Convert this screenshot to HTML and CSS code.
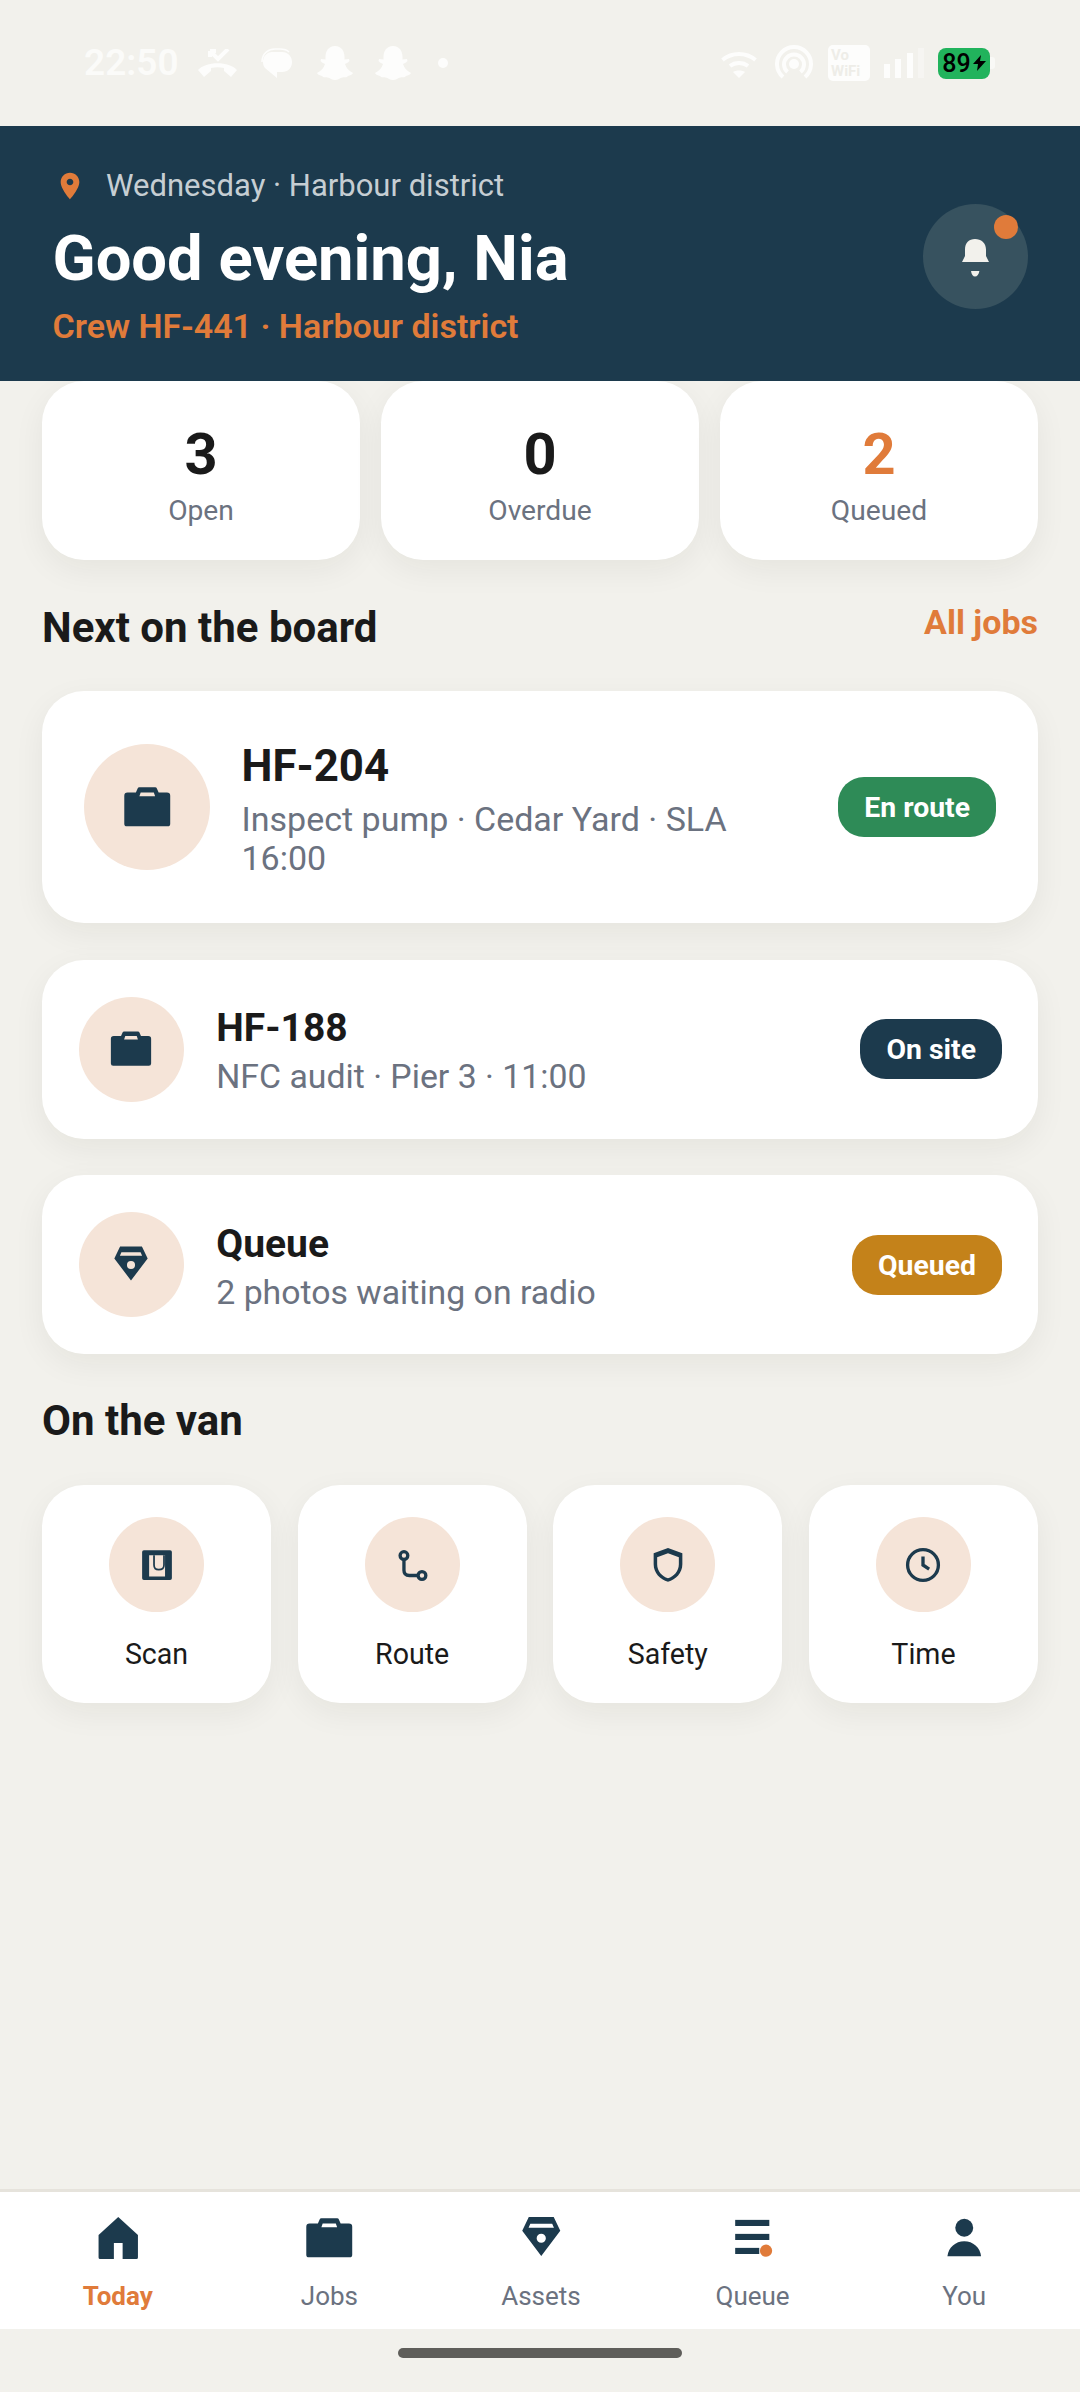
FILE: index.html
```html
<!DOCTYPE html>
<html lang="en">
<head>
<meta charset="utf-8">
<title>Today</title>
<link rel="stylesheet" href="styles.css">
</head>
<body>
<svg class="defs" aria-hidden="true">
  <defs>
    <symbol id="i-case" viewBox="0 0 24 24"><path fill-rule="evenodd" d="M3 5.2H6.8L7.6 3.4Q7.8 2.9 8.4 2.9H15.6Q16.2 2.9 16.4 3.4L17.2 5.2H21Q22.5 5.2 22.5 6.7V19.5Q22.5 20.7 21.3 20.7H2.7Q1.5 20.7 1.5 19.5V6.7Q1.5 5.2 3 5.2ZM9 5.2L8.4 7H15.6L15 5.2Z"/></symbol>
    <symbol id="i-gem" viewBox="0 0 24 24"><path fill-rule="evenodd" d="M6.3 2.3H17.7L20.7 8.6L12 20.1L3.3 8.6ZM7 5.4L6.2 7.2H17.8L17 5.4ZM12 9.9A2.1 2.1 0 1 0 12 14.1A2.1 2.1 0 1 0 12 9.9Z"/></symbol>
    <symbol id="i-ghost" viewBox="0 0 36 34"><path d="M18 0C24.5 0 27.5 5 27.5 11L27.5 13.5L32 13L32.5 15C31 17 29 17.5 28 18C29 22 32 25 36 27C35 29 33 29.5 31 30C29.5 32 27 31 25.5 31.5C23 32 21 34 18 34C15 34 13 32 10.5 31.5C9 31 6.5 32 5 30C3 29.5 1 29 0 27C4 25 7 22 8 18C7 17.5 5 17 3.5 15L4 13L8.5 13.5L8.5 11C8.5 5 11.5 0 18 0Z"/></symbol>
  </defs>
</svg>
<div class="phone">
  <div class="statusbar">
    <div class="status-left">
      <span class="clock">22:50</span>
      <svg class="st st-call" viewBox="0 0 40 28"><path d="M0 21C8 12 31 12 39 21L33 28L26 22V19C22 18 17 18 13 19V22L6 28Z"/><path class="st-line" d="M12 2L20 10L30 0M12 2H18M12 2V8"/></svg>
      <svg class="st st-bubble" viewBox="0 0 35 30"><path class="st-thin" d="M2 14C2 5 9 1 15 1H20C24 1 27 2 29 4"/><path d="M12 4H22C28 4 32 8.500 32 14C32 20 28 24 22 24H17V30L5 20C3 18 3 15 3 13.500C3 8.500 7 4 12 4Z"/></svg>
      <svg class="st st-ghost"><use href="#i-ghost"/></svg>
      <svg class="st st-ghost"><use href="#i-ghost"/></svg>
      <svg class="st st-dot" viewBox="0 0 20 10"><circle cx="10" cy="5" r="5"/></svg>
    </div>
    <div class="status-right">
      <svg class="st st-wifi" viewBox="0 0 41 29"><path class="st-line" d="M2.500 11C12 3 26 3 35.500 11M10 17C15 13 23 13 28 17"/><path d="M13 23C16 21 22 21 25 23L19 29Z"/></svg>
      <svg class="st st-hotspot" viewBox="0 0 39 36"><path class="st-line" d="M8 32A17 17 0 1 1 30 32M12.500 27A10 10 0 1 1 25.500 27"/><circle cx="19" cy="19" r="5"/></svg>
      <div class="vowifi"><span>Vo</span><span>WiFi</span></div>
      <svg class="st st-signal" viewBox="0 0 40 30"><rect x="0" y="16" width="6" height="14"/><rect x="11" y="11" width="6" height="19"/><rect x="23" y="5" width="6" height="25"/><rect class="st-faint" x="34" y="0" width="6" height="30"/></svg>
      <div class="battery">
        <div class="battery-body"><span>89</span><svg class="bolt" viewBox="0 0 13 16"><path d="M8 0L0 9H5L4 16L13 6H7Z"/></svg></div>
        <div class="battery-nub"></div>
      </div>
    </div>
  </div>

  <header class="hero">
    <div class="hero-text">
      <div class="hero-place">
        <svg class="pin" viewBox="0 0 24 24"><path d="M12 2C8.130 2 5 5.130 5 9c0 5.250 7 13 7 13s7-7.750 7-13c0-3.870-3.130-7-7-7zm0 9.500c-1.380 0-2.500-1.120-2.500-2.500s1.120-2.500 2.500-2.500 2.500 1.120 2.500 2.500-1.120 2.500-2.500 2.500z"/></svg>
        <span>Wednesday · Harbour district</span>
      </div>
      <h1 class="hero-title">Good evening, Nia</h1>
      <div class="hero-crew">Crew HF-441 · Harbour district</div>
    </div>
    <div class="bell">
      <svg class="bell-icon" viewBox="0 0 42 42"><path d="M21 3C27 3 32 7 32 13.500V20L35 26H8L11 20V13.500C11 7 15 3 21 3Z"/><path d="M17 35H25.400C25 38.500 23 40.500 21 40.500C19 40.500 17.400 38.500 17 35Z"/></svg>
      <span class="bell-dot"></span>
    </div>
  </header>

  <main class="content">
    <section class="stats">
      <div class="stat"><div class="stat-num">3</div><div class="stat-label">Open</div></div>
      <div class="stat"><div class="stat-num">0</div><div class="stat-label">Overdue</div></div>
      <div class="stat"><div class="stat-num accent">2</div><div class="stat-label">Queued</div></div>
    </section>

    <div class="section-head">
      <h2 class="section-title">Next on the board</h2>
      <span class="section-link">All jobs</span>
    </div>

    <section class="jobs">
      <article class="job job-lead">
        <div class="disc disc-lg"><svg class="ico ico-lg"><use href="#i-case"/></svg></div>
        <div class="job-text">
          <div class="job-title">HF-204</div>
          <div class="job-sub">Inspect pump · Cedar Yard · SLA 16:00</div>
        </div>
        <span class="badge badge-green">En route</span>
      </article>
      <article class="job">
        <div class="disc disc-md"><svg class="ico ico-md"><use href="#i-case"/></svg></div>
        <div class="job-text">
          <div class="job-title">HF-188</div>
          <div class="job-sub">NFC audit · Pier 3 · 11:00</div>
        </div>
        <span class="badge badge-navy">On site</span>
      </article>
      <article class="job">
        <div class="disc disc-md"><svg class="ico ico-md"><use href="#i-gem"/></svg></div>
        <div class="job-text">
          <div class="job-title">Queue</div>
          <div class="job-sub">2 photos waiting on radio</div>
        </div>
        <span class="badge badge-gold">Queued</span>
      </article>
    </section>

    <h2 class="section-title van-title">On the van</h2>

    <section class="tools">
      <div class="tool">
        <div class="disc disc-sm">
          <svg class="ico ico-sm" viewBox="0 0 24 24"><path fill-rule="evenodd" d="M4.500 3.500H19.500Q20.500 3.500 20.500 4.500V19.500Q20.500 20.500 19.500 20.500H4.500Q3.500 20.500 3.500 19.500V4.500Q3.500 3.500 4.500 3.500ZM7.500 6.400V18.600H16.600V6.400Z"/><path class="ico-line-thin" d="M10.300 6.400V12Q10.300 14.700 13 14.700Q16 14.700 16 12V6.400"/></svg>
        </div>
        <div class="tool-label">Scan</div>
      </div>
      <div class="tool">
        <div class="disc disc-sm">
          <svg class="ico ico-sm ico-stroke" viewBox="0 0 24 24"><circle cx="7.400" cy="6.600" r="2.200"/><circle cx="17.700" cy="18" r="2.200"/><path d="M7.400 8.800V15Q7.400 18 10.500 18H15.500"/></svg>
        </div>
        <div class="tool-label">Route</div>
      </div>
      <div class="tool">
        <div class="disc disc-sm">
          <svg class="ico ico-sm" viewBox="0 0 24 24"><path fill-rule="evenodd" d="M12 2.300L20.200 5.300V11.500C20.200 16.500 16.500 20.200 12 21.600C7.500 20.200 3.800 16.500 3.800 11.500V5.300ZM12 5.300L5.800 7.600V11.500C5.800 15.500 8.600 18.400 12 19.600C15.400 18.400 18.200 15.500 18.200 11.500V7.600Z"/></svg>
        </div>
        <div class="tool-label">Safety</div>
      </div>
      <div class="tool">
        <div class="disc disc-sm">
          <svg class="ico ico-sm ico-stroke" viewBox="0 0 24 24"><circle cx="12" cy="12" r="8.800"/><path d="M12 7.200V12L15.500 14.300"/></svg>
        </div>
        <div class="tool-label">Time</div>
      </div>
    </section>
  </main>

  <nav class="tabbar">
    <div class="tab tab-active">
      <svg class="ico tab-ico" viewBox="0 0 24 24"><path d="M12 2.300L21 10.500V20.800A.7.7 0 0 1 20.300 21.500H14V14.200H10V21.500H3.700A.7.7 0 0 1 3 20.800V10.500Z"/></svg>
      <span>Today</span>
    </div>
    <div class="tab">
      <svg class="ico tab-ico"><use href="#i-case"/></svg>
      <span>Jobs</span>
    </div>
    <div class="tab">
      <svg class="ico tab-ico"><use href="#i-gem"/></svg>
      <span>Assets</span>
    </div>
    <div class="tab">
      <svg class="ico tab-ico" viewBox="0 0 24 24"><rect x="4.200" y="3.600" width="15.600" height="2.800"/><rect x="4.200" y="10" width="15.600" height="2.800"/><rect x="4.200" y="16.400" width="11" height="2.800"/><circle class="ico-dot" cx="18.300" cy="17.700" r="2.800"/></svg>
      <span>Queue</span>
    </div>
    <div class="tab">
      <svg class="ico tab-ico" viewBox="0 0 24 24"><circle cx="12" cy="7.200" r="4.100"/><path d="M4.300 20.200C4.800 16.200 8 13.400 12 13.400C16 13.400 19.200 16.200 19.700 20.200Z"/></svg>
      <span>You</span>
    </div>
  </nav>

  <div class="gesture"><div class="gesture-bar"></div></div>
</div>
</body>
</html>
```

FILE: styles.css
```css
* { box-sizing: border-box; }
html, body { margin: 0; padding: 0; }
body {
  background: #f2f1ec;
  color: #1a1a1a;
  font-family: Roboto, "Noto Sans", "Liberation Sans", sans-serif;
}
h1, h2 { margin: 0; }
.defs { display: none; }
.phone {
  width: 1080px;
  height: 2392px;
  display: flex;
  flex-direction: column;
  overflow: hidden;
}

/* status bar */
.statusbar {
  height: 126px;
  flex: none;
  display: flex;
  justify-content: space-between;
  align-items: center;
  padding: 0 85px 0 84px;
}
.status-left, .status-right { display: flex; align-items: center; }
.status-left { gap: 22px; }
.status-right { gap: 14px; }
.clock { font-size: 37px; line-height: 44px; font-weight: 600; color: #fbfbf9; width: 92px; white-space: nowrap; }
.st { display: block; fill: #fdfdfc; flex: none; }
.st-line { fill: none; stroke: #fdfdfc; stroke-width: 4; }
.st-thin { fill: none; stroke: #fdfdfc; stroke-width: 1.500; }
.st-faint { opacity: .4; }
.st-call { width: 40px; height: 28px; }
.st-bubble { width: 35px; height: 30px; }
.st-ghost { width: 36px; height: 34px; }
.st-dot { width: 20px; height: 10px; }
.st-wifi { width: 41px; height: 29px; }
.st-hotspot { width: 39px; height: 36px; }
.st-signal { width: 40px; height: 30px; }
.vowifi {
  width: 42px;
  height: 36px;
  background: #fdfdfc;
  border-radius: 5px;
  padding: 2px 3px;
  color: #eeede8;
  font-size: 15px;
  line-height: 16px;
  font-weight: 700;
  display: flex;
  flex-direction: column;
}
.battery { display: flex; align-items: center; }
.battery-body {
  width: 52px;
  height: 31px;
  background: #21b35c;
  border-radius: 8px;
  color: #000;
  font-size: 25px;
  font-weight: 500;
  line-height: 31px;
  display: flex;
  align-items: center;
  justify-content: center;
  gap: 2px;
}
.bolt { width: 13px; height: 16px; fill: #000; }
.battery-nub { width: 5px; height: 12px; background: #f9f9f6; border-radius: 0 3px 3px 0; }

/* hero */
.hero {
  position: relative;
  z-index: 1;
  flex: none;
  height: 255px;
  background: #1c3a4d;
  padding: 6px 52.500px 0;
  display: flex;
  align-items: center;
  justify-content: space-between;
}
.hero-place {
  display: flex;
  align-items: center;
  gap: 20px;
  padding-left: 1.500px;
  color: #c6ced3;
  font-size: 31px;
  line-height: 42px;
}
.pin { width: 32px; height: 32px; fill: #e07b3a; flex: none; }
.hero-title {
  margin-top: 12px;
  color: #fff;
  font-size: 63.300px;
  line-height: 79px;
  font-weight: 700;
}
.hero-crew {
  margin-top: 6px;
  color: #e07b3a;
  font-size: 34px;
  line-height: 45px;
  font-weight: 600;
}
.bell {
  position: relative;
  width: 105px;
  height: 105px;
  border-radius: 50%;
  background: #37525f;
  display: flex;
  align-items: center;
  justify-content: center;
}
.bell-icon { width: 42px; height: 42px; fill: #f2f1ec; }
.bell-dot {
  position: absolute;
  top: 11px;
  right: 10px;
  width: 24px;
  height: 24px;
  border-radius: 50%;
  background: #e07b3a;
}

/* main */
.content { flex: 1; padding: 0 42px; }
.stats { display: grid; grid-template-columns: repeat(3, 1fr); gap: 21px; }
.stat {
  background: #fff;
  border-radius: 42px;
  padding: 38px 0 30px;
  text-align: center;
  box-shadow: 0 10px 32px rgba(40, 40, 20, .06);
}
.stat-num { font-size: 57.750px; line-height: 70px; font-weight: 700; }
.stat-num.accent { color: #e07b3a; }
.stat-label { margin-top: 3px; font-size: 28.200px; line-height: 38px; color: #6b7280; }

.section-head {
  display: flex;
  justify-content: space-between;
  align-items: flex-start;
  margin: 40px 0 36px;
}
.section-title { font-size: 42px; line-height: 55px; font-weight: 700; }
.section-link { font-size: 34px; line-height: 44px; font-weight: 700; color: #e07b3a; }
.van-title { margin: 39px 0 37px; }

.jobs { display: flex; flex-direction: column; gap: 36.500px; }
.job {
  background: #fff;
  border-radius: 42px;
  display: flex;
  align-items: center;
  gap: 32.500px;
  padding: 37px 36px 37px 36.750px;
  box-shadow: 0 10px 32px rgba(40, 40, 20, .06);
}
.job-lead { padding: 45.250px 42px; gap: 31.500px; }
.disc {
  flex: none;
  border-radius: 50%;
  background: #f5e4d8;
  display: flex;
  align-items: center;
  justify-content: center;
}
.disc-lg { width: 126px; height: 126px; }
.disc-md { width: 105px; height: 105px; }
.disc-sm { width: 95px; height: 95px; }
.ico { display: block; fill: #1c3a4d; flex: none; }
.ico-lg { width: 52.500px; height: 52.500px; }
.ico-md { width: 46px; height: 46px; }
.ico-sm { width: 42px; height: 42px; }
.ico-stroke { fill: none; stroke: #1c3a4d; stroke-width: 1.900; }
.ico-line-thin { fill: none; stroke: #1c3a4d; stroke-width: 1; }
.ico-dot { fill: #e07b3a; }

.job-text { flex: 1; min-width: 0; padding-top: 6px; }
.job-lead .job-text { padding-top: 1px; }
.job-title { font-size: 39px; line-height: 44px; font-weight: 700; }
.job-sub { margin-top: 6px; font-size: 33.800px; line-height: 42px; color: #6b7280; }
.job-lead .job-title { font-size: 43.800px; line-height: 58px; }
.job-lead .job-sub { margin-top: 4.500px; font-size: 34px; line-height: 39px; }

.badge {
  flex: none;
  height: 60px;
  padding: 0 26px;
  border-radius: 26px;
  color: #fff;
  font-size: 28.400px;
  line-height: 62px;
  font-weight: 700;
}
.badge-green { background: #2e8b57; }
.badge-navy { background: #1c3a4d; }
.badge-gold { background: #c4821a; }

.tools { display: grid; grid-template-columns: repeat(4, 1fr); gap: 26.600px; }
.tool {
  background: #fff;
  border-radius: 42px;
  padding: 32px 0 30px;
  display: flex;
  flex-direction: column;
  align-items: center;
  box-shadow: 0 10px 32px rgba(40, 40, 20, .06);
}
.tool-label { margin-top: 22.500px; font-size: 28.600px; line-height: 38px; color: #1a1a1a; }

/* tabs */
.tabbar {
  flex: none;
  height: 140px;
  background: #fff;
  border-top: 3px solid #e6e3dc;
  padding: 20px 10px 0 12px;
  display: grid;
  grid-template-columns: repeat(5, 1fr);
}
.tab {
  display: flex;
  flex-direction: column;
  align-items: center;
  gap: 14.500px;
  color: #6b7280;
  font-size: 26px;
  line-height: 34px;
}
.tab-active { color: #e07b3a; font-weight: 700; }
.tab-ico { width: 52.500px; height: 52.500px; }

.gesture {
  flex: none;
  height: 63px;
  display: flex;
  justify-content: center;
  padding-top: 19px;
}
.gesture-bar { width: 284px; height: 10px; border-radius: 5px; background: #5f5e5a; }
```
